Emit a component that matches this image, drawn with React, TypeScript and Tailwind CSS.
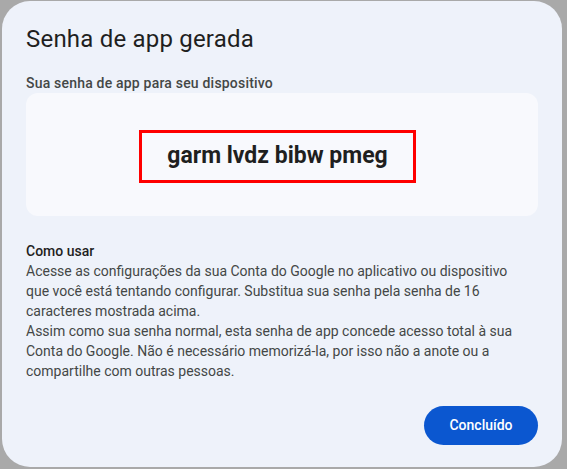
import React from "react";

const App = () => {
  return (
    <div className="w-[567px] h-[469px] bg-[#a9a9a9] pl-[2px] pt-[1px] overflow-hidden font-['Roboto',sans-serif]">
      <div className="w-[560px] h-[466px] rounded-[28px] bg-[#eef2fa] px-[24px] pt-[22px] flex flex-col">
        {/* Title */}
        <h1 className="text-[24px] leading-[32px] text-[#1f1f1f] font-normal tracking-[0.2px]">
          Senha de app gerada
        </h1>

        <p className="mt-[18px] text-[14px] leading-[20px] font-medium text-[#444746] tracking-[0.2px]">
          Sua senha de app para seu dispositivo
        </p>

        {/* Password box */}
        <div className="h-[123px] w-[512px] rounded-[12px] bg-[#f8f9fd] flex items-center justify-center pt-[3px] pr-[9px]">
          <div className="w-[277px] h-[53px] border-[3px] border-[#ff0000] flex items-center justify-center">
            <span className="text-[23px] font-bold text-[#1f1f1f]">
              garm lvdz bibw pmeg
            </span>
          </div>
        </div>

        {/* How to use */}
        <div className="mt-[25px] text-[14px] leading-[20px] text-[#444746]">
          <p className="font-medium text-[#1f1f1f]">Como usar</p>
          <p>
            Acesse as configurações da sua Conta do Google no aplicativo ou dispositivo
            <br />
            que você está tentando configurar. Substitua sua senha pela senha de 16
            <br />
            caracteres mostrada acima.
          </p>
          <p>
            Assim como sua senha normal, esta senha de app concede acesso total à sua
            <br />
            Conta do Google. Não é necessário memorizá-la, por isso não a anote ou a
            <br />
            compartilhe com outras pessoas.
          </p>
        </div>

        {/* Actions */}
        <div className="mt-auto mb-[22px] flex justify-end">
          <button className="h-[39px] w-[114px] rounded-full bg-[#0b57d0] text-white text-[14px] font-medium">
            Concluído
          </button>
        </div>
      </div>
    </div>
  );
};

export default App;
